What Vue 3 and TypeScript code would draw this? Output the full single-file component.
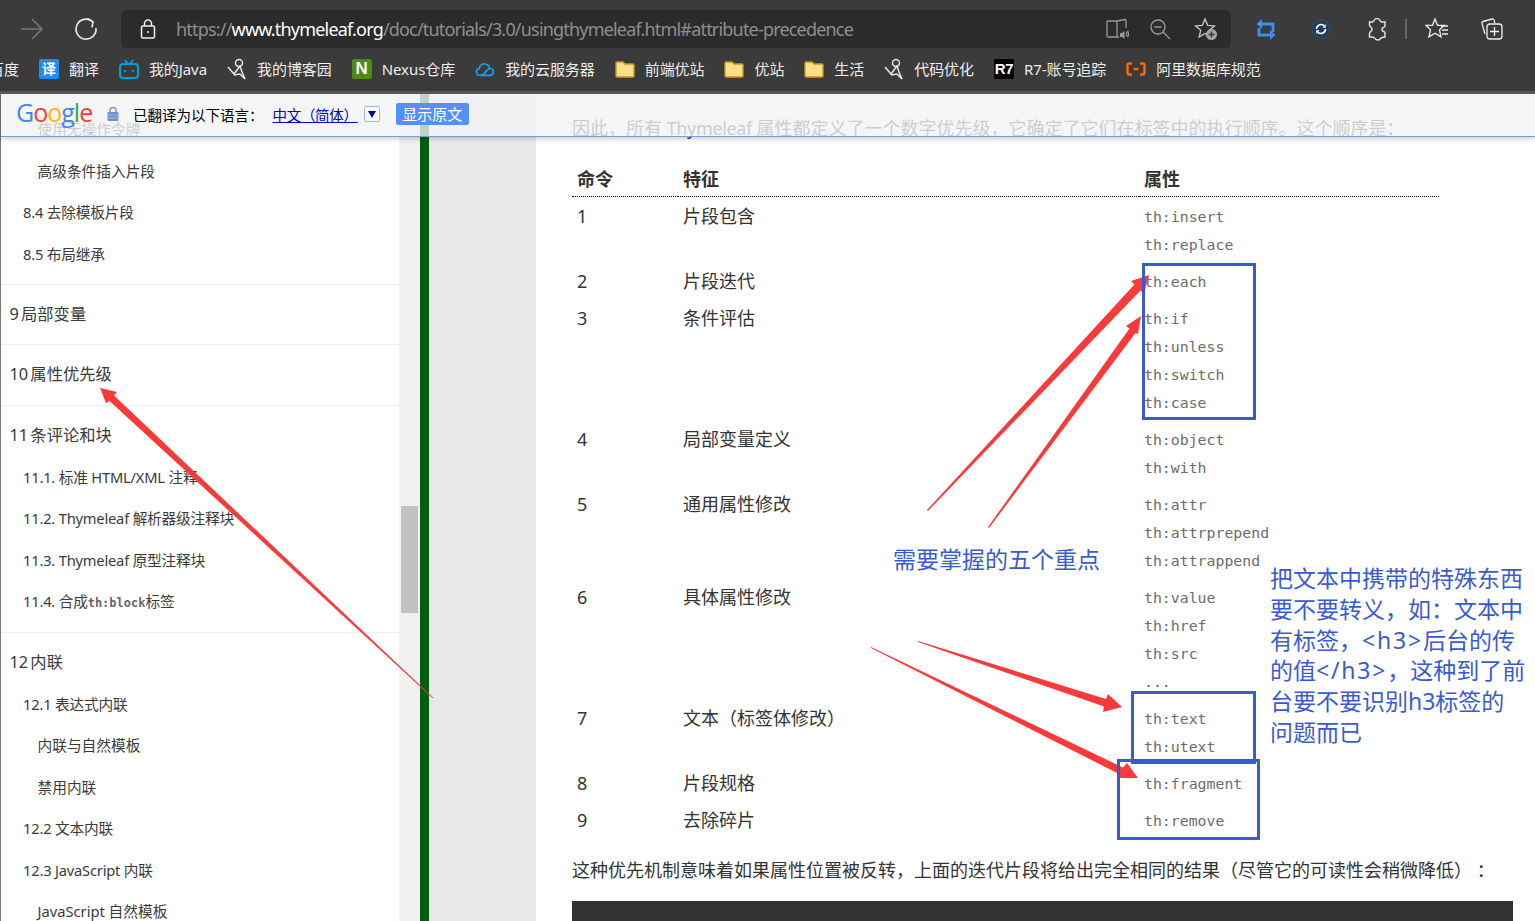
<script setup lang="ts">
interface NavItem { text: string; level: number; code?: string; after?: string }
interface Row { no: string; name: string; attrs: string[] }
interface Bookmark { label: string; icon: string }

const bookmarks: Bookmark[] = [
  { label: '翻译', icon: 'translate' },
  { label: '我的Java', icon: 'bili' },
  { label: '我的博客园', icon: 'blog' },
  { label: 'Nexus仓库', icon: 'nexus' },
  { label: '我的云服务器', icon: 'cloud' },
  { label: '前端优站', icon: 'folder' },
  { label: '优站', icon: 'folder' },
  { label: '生活', icon: 'folder' },
  { label: '代码优化', icon: 'blog' },
  { label: 'R7-账号追踪', icon: 'r7' },
  { label: '阿里数据库规范', icon: 'ali' },
]

const nav: NavItem[][] = [
  [
    { text: '使用无操作令牌', level: 2 },
    { text: '高级条件插入片段', level: 2 },
    { text: '8.4 去除模板片段', level: 1 },
    { text: '8.5 布局继承', level: 1 },
  ],
  [{ text: '9 局部变量', level: 0 }],
  [{ text: '10 属性优先级', level: 0 }],
  [
    { text: '11 条评论和块', level: 0 },
    { text: '11.1. 标准 HTML/XML 注释', level: 1 },
    { text: '11.2. Thymeleaf 解析器级注释块', level: 1 },
    { text: '11.3. Thymeleaf 原型注释块', level: 1 },
    { text: '11.4. 合成', code: 'th:block', after: '标签', level: 1 },
  ],
  [
    { text: '12 内联', level: 0 },
    { text: '12.1 表达式内联', level: 1 },
    { text: '内联与自然模板', level: 2 },
    { text: '禁用内联', level: 2 },
    { text: '12.2 文本内联', level: 1 },
    { text: '12.3 JavaScript 内联', level: 1 },
    { text: 'JavaScript 自然模板', level: 2 },
  ],
]

const rows: Row[] = [
  { no: '1', name: '片段包含', attrs: ['th:insert', 'th:replace'] },
  { no: '2', name: '片段迭代', attrs: ['th:each'] },
  { no: '3', name: '条件评估', attrs: ['th:if', 'th:unless', 'th:switch', 'th:case'] },
  { no: '4', name: '局部变量定义', attrs: ['th:object', 'th:with'] },
  { no: '5', name: '通用属性修改', attrs: ['th:attr', 'th:attrprepend', 'th:attrappend'] },
  { no: '6', name: '具体属性修改', attrs: ['th:value', 'th:href', 'th:src', '...'] },
  { no: '7', name: '文本（标签体修改）', attrs: ['th:text', 'th:utext'] },
  { no: '8', name: '片段规格', attrs: ['th:fragment'] },
  { no: '9', name: '去除碎片', attrs: ['th:remove'] },
]

// hand-drawn annotation arrows, full page coordinates
const arrows: string[] = [
  '100,388 117,392 114,395.500 433.500,698 433,698.500 109.500,401 106,403',
  '1149,275 1131,281 1134.400,284.500 927,510 928,511 1140.500,290.500 1144,294',
  '1141,316 1126,326 1129.500,328.500 988,527 989,528 1135.500,333 1138,334',
  '1122,707 1108,694 1106,699 918,641 918,642 1104,706.500 1103,712',
  '1138,778 1127,763 1123,767.500 871,647 871,648 1118,773.500 1120,778',
]
</script>

<template>
  <div class="screen">
    <header class="chrome">
      <div class="toolbar">
        <svg class="tool first" width="24" height="24" viewBox="0 0 24 24" fill="none" stroke="#777" stroke-width="1.5"><path d="M1 12h20M12 2l10 10-10 10" /></svg>
        <svg class="tool" width="24" height="24" viewBox="0 0 24 24" fill="none" stroke="#e8e8e8" stroke-width="1.6"><path d="M18.500 4.500A10 10 0 1 0 22 11" /><path d="M13.500 1.500l5.500 3.300-1 5.700" /></svg>
        <div class="url-bar">
          <svg class="lock" width="18" height="20" viewBox="0 0 18 20" fill="none" stroke="#eee" stroke-width="1.5"><rect x="2.500" y="7" width="13" height="12" rx="1.500" /><path d="M5.500 7V4.500a3.500 3.500 0 0 1 7 0V7" /><circle cx="9" cy="13" r="1" fill="#eee" stroke="none" /></svg>
          <span class="url"><span>https://</span><b>www.thymeleaf.org</b><span>/doc/tutorials/3.0/usingthymeleaf.html#attribute-precedence</span></span>
          <svg class="url-icon read" width="24" height="22" viewBox="0 0 24 22" fill="none" stroke="#999" stroke-width="1.300"><path d="M12 3H3a1 1 0 0 0-1 1v14a1 1 0 0 0 1 1h9zM12 3l8-1.500a1 1 0 0 1 1 1V10M12 19h2" /><path d="M15 15h2l2.500-2v8L17 19h-2z" fill="#999" stroke="none" /><path d="M21 14c1 1 1 3 0 4M22.500 13c1.500 2 1.500 4 0 6" /></svg>
          <svg class="url-icon zoom" width="22" height="22" viewBox="0 0 22 22" fill="none" stroke="#999" stroke-width="1.400"><circle cx="9" cy="9" r="7" /><path d="M5.500 9h7M14 14l7 7" /></svg>
          <svg class="url-icon fav" width="24" height="24" viewBox="0 0 24 24" fill="none" stroke="#ccc" stroke-width="1.300"><path d="M11 2l2.700 6.300 6.800.6-5.200 4.400 1.500 6.700L11 16.500 5.200 20l1.500-6.700L1.500 8.900l6.800-.6z" /><circle cx="17.500" cy="17.500" r="5.500" fill="#a5a5a5" stroke="none" /><path d="M14.500 17.500h6M17.500 14.500v6" stroke="#333" stroke-width="1.500" /></svg>
        </div>
        <svg class="ext loop" width="22" height="24" viewBox="0 0 22 24" fill="none" stroke="#3f8cf5" stroke-width="2.800"><path d="M5 7h13v8M16 18H4v-7" /><path d="M1.500 7L7 2v10zM20.500 18L15 13v10z" fill="#3f8cf5" stroke="none" /></svg>
        <svg class="ext sync" width="20" height="20" viewBox="0 0 20 20"><circle cx="10" cy="10" r="9" fill="#1f3c5c" stroke="#2f5170" /><path d="M5.500 10a4.500 4.500 0 0 1 7.500-3.300M14.500 10A4.500 4.500 0 0 1 7 13.300" fill="none" stroke="#fff" stroke-width="1.700" /><path d="M11.500 9l3.500-.5-.5-3.500zM8.500 11L5 11.500l.5 3.500z" fill="#fff" /></svg>
        <svg class="ext puzzle" width="22" height="24" viewBox="0 0 22 24" fill="none" stroke="#e6e6e6" stroke-width="1.400"><path d="M8 3.500c1-2.500 5-2.500 6 0 .4 1 1 1.500 2.500 1.500H19v4c0 1-.8 1.300-1.500 1.500-2 .6-2 3.400 0 4 .7.200 1.500.5 1.500 1.500v4c-2 .4-3.500 0-4.500 1.500-1 2-4.500 2-5.500 0-.7-1.300-2-1.500-3.500-1.500H3.500v-3.500c0-1 .8-1.500 1.300-2 1.700-1.500 1.700-3 0-4.500-.5-.5-1.300-1-1.300-2V5H6c1 0 1.600-.6 2-1.500z" /></svg>
        <span class="divider"></span>
        <svg class="ext star" width="24" height="24" viewBox="0 0 24 24" fill="none" stroke="#eee" stroke-width="1.300"><path d="M10 2l2.500 6.300H19l-4.500 4.600 1.500 7-6-3.600-6 3.600 1.500-7L1 8.300h6.500z" /><path d="M16 9h7M17 13h6M17 17h6" /></svg>
        <svg class="ext coll" width="24" height="24" viewBox="0 0 24 24" fill="none" stroke="#eee" stroke-width="1.300"><path d="M5 17L2 6.500c-.3-1 .2-1.800 1-2L12 2c1-.2 1.800.2 2 1l1 3" /><rect x="7" y="7" width="15" height="15" rx="3" /><path d="M14.500 10v9M10 14.500h9" /></svg>
      </div>
      <nav class="bookmarks">
        <span class="bm-cut">百度</span>
        <div v-for="bm in bookmarks" :key="bm.label" class="bm">
          <span class="bm-icon">
            <span v-if="bm.icon === 'translate'" class="ic-translate">译</span>
            <svg v-else-if="bm.icon === 'bili'" width="20" height="20" viewBox="0 0 20 20" fill="none" stroke="#00a1d6" stroke-width="2"><rect x="1" y="5" width="18" height="14" rx="3" /><path d="M6 1l3 4M14 1l-3 4" /><path d="M6 11v2M14 11v2" /></svg>
            <svg v-else-if="bm.icon === 'blog'" width="20" height="22" viewBox="0 0 20 22" fill="none" stroke="#e8e8e8" stroke-width="1.500"><circle cx="12" cy="5" r="3.500" /><path d="M1 9l6 7 6-8 2 6 3 7-5-5-6 1" /></svg>
            <span v-else-if="bm.icon === 'nexus'" class="ic-nexus">N</span>
            <svg v-else-if="bm.icon === 'cloud'" width="22" height="18" viewBox="0 0 22 18" fill="none" stroke="#1e9cf0" stroke-width="1.800"><path d="M5 16a3.800 3.800 0 0 1-.5-7.500C5.500 4 9.500 2 13 4c2 1 3 3 3 5" /><path d="M5 16h12a3.800 3.800 0 0 0 0-7.500c-2.500 0-4 2-6 4.500-1.500 2-3 3-6 3z" /></svg>
            <svg v-else-if="bm.icon === 'folder'" width="20" height="20" viewBox="0 0 20 20"><path d="M1 4a1 1 0 0 1 1-1h6l2 2h8a1 1 0 0 1 1 1v11a1 1 0 0 1-1 1H2a1 1 0 0 1-1-1z" fill="#fbde85" stroke="#c8962a" stroke-width="1.400" /></svg>
            <span v-else-if="bm.icon === 'r7'" class="ic-r7">R7</span>
            <svg v-else-if="bm.icon === 'ali'" width="20" height="14" viewBox="0 0 20 14" fill="none" stroke="#ff6a00" stroke-width="2.400"><path d="M6 1.500H3a1.500 1.500 0 0 0-1.500 1.500v8A1.500 1.500 0 0 0 3 12.500h3M14 1.500h3A1.500 1.500 0 0 1 18.500 3v8a1.500 1.500 0 0 1-1.500 1.500h-3M7.500 7h5" /></svg>
          </span>
          <span class="bm-label">{{ bm.label }}</span>
        </div>
      </nav>
    </header>

    <main class="page">
      <aside class="sidebar">
        <div v-for="(group, g) in nav" :key="g" class="nav-group">
          <div v-for="item in group" :key="item.text" class="nav-item" :class="'lv' + item.level">
            {{ item.text }}<code v-if="item.code">{{ item.code }}</code>{{ item.after }}
          </div>
        </div>
      </aside>
      <div class="scrollbar"><div class="thumb"></div></div>
      <div class="green"></div>
      <div class="gutter"></div>
      <article class="content">
        <p>因此，所有 <span class="tight">Thymeleaf</span> 属性都定义了一个数字优先级，它确定了它们在标签中的执行顺序。这个顺序是：</p>
        <table>
          <thead>
            <tr><th class="c1">命令</th><th class="c2">特征</th><th>属性</th></tr>
          </thead>
          <tbody>
            <tr v-for="r in rows" :key="r.no">
              <td>{{ r.no }}</td>
              <td>{{ r.name }}</td>
              <td class="attrs"><code v-for="a in r.attrs" :key="a">{{ a }}</code></td>
            </tr>
          </tbody>
        </table>
        <p class="last">这种优先机制意味着如果属性位置被反转，上面的迭代片段将给出完全相同的结果（尽管它的可读性会稍微降低） ：</p>
        <div class="code-block"></div>
      </article>
    </main>

    <div class="translate-bar">
      <span class="google"><i class="b">G</i><i class="r">o</i><i class="y">o</i><i class="b">g</i><i class="g">l</i><i class="r">e</i></span>
      <svg class="tb-lock" width="12" height="14" viewBox="0 0 12 14"><rect x="0.500" y="5" width="11" height="9" rx="1" fill="#6f93c9" /><path d="M3 5V3.500a3 3 0 0 1 6 0V5" fill="none" stroke="#6f93c9" stroke-width="1.500" /><path d="M1 8h10M1 11h10" stroke="#a9c0e2" stroke-width="0.800" /></svg>
      <span class="tb-text">已翻译为以下语言：</span>
      <a class="tb-link">中文（简体）</a>
      <span class="tb-drop"><i></i></span>
      <button class="tb-btn">显示原文</button>
    </div>

    <svg class="marks" width="1535" height="921" viewBox="0 0 1535 921">
      <polygon v-for="(p, i) in arrows" :key="i" :points="p" fill="#f93a3a" />
      <g fill="none" stroke="#3a5bd0" stroke-width="3">
        <rect x="1143.500" y="264.500" width="111" height="154" />
        <rect x="1132.500" y="692.500" width="122" height="70" />
        <rect x="1118.500" y="760.500" width="140" height="78" />
      </g>
    </svg>
    <div class="note note-a">需要掌握的五个重点</div>
    <div class="note note-b">把文本中携带的特殊东西<br />要不要转义，如：文本中<br />有标签，<span class="wide">&lt;h3&gt;</span>后台的传<br />的值<span class="wide">&lt;/h3&gt;</span>，这种到了前<br />台要不要识别h3标签的<br />问题而已</div>
  </div>
</template>

<style scoped>
.screen {
  position: relative;
  width: 1535px;
  height: 921px;
  overflow: hidden;
  background: #fff;
  color: #333;
  font-family: "Noto Sans", "Noto Sans CJK SC", sans-serif;
}

.chrome {
  height: 94px;
  background: #3b3b3b;
  border-bottom: 3px solid #5c5c5c;
  box-sizing: border-box;
  color: #eee;
}
.toolbar {
  display: flex;
  align-items: center;
  height: 58px;
  padding-bottom: 1px;
  box-sizing: border-box;
}
.tool.first { margin-left: 20px; }
.tool + .tool { margin-left: 30px; }
.url-bar {
  display: flex;
  align-items: center;
  width: 1110px;
  height: 38px;
  margin-left: 23px;
  background: #2b2b2b;
  border-radius: 6px;
}
.lock { margin-left: 18px; }
.url {
  margin-left: 19px;
  font-size: 18px;
  letter-spacing: -0.81px;
  color: #8f8f8f;
  white-space: nowrap;
}
.url b { font-weight: 400; color: #fff; }
.url-icon { flex: none; }
.read { margin-left: auto; }
.zoom { margin-left: 20px; }
.fav { margin-left: 23px; margin-right: 13px; }
.ext { flex: none; }
.loop { margin-left: 24px; }
.sync { margin-left: 34px; }
.puzzle { margin-left: 35px; }
.divider {
  width: 2px;
  height: 20px;
  margin-left: 17px;
  background: #666;
}
.star { margin-left: 18px; }
.coll { margin-left: 31px; }

.bookmarks {
  display: flex;
  align-items: center;
  height: 24px;
  margin-top: -2px;
  white-space: nowrap;
  font-size: 15px;
}
.bm-cut {
  width: 19px;
  margin-right: 20px;
  direction: rtl;
  overflow: hidden;
}
.bm {
  display: flex;
  align-items: center;
  margin-right: 20px;
}
.bm-label { letter-spacing: -0.07px; }
.bm-icon {
  display: flex;
  align-items: center;
  justify-content: center;
  flex: none;
  width: 20px;
  height: 20px;
  margin-top: 2px;
  margin-right: 10px;
}
.ic-translate {
  width: 20px;
  height: 20px;
  border-radius: 2px;
  background: #1d8cf5;
  color: #fff;
  font-size: 14px;
  font-weight: 700;
  line-height: 20px;
  text-align: center;
}
.ic-nexus {
  width: 20px;
  height: 20px;
  border-radius: 2px;
  background: #4f8a10;
  color: #fff;
  font: 700 17px/20px "Liberation Sans", sans-serif;
  text-align: center;
}
.ic-r7 {
  width: 20px;
  height: 20px;
  background: #000;
  color: #fff;
  font: 700 15px/20px "Liberation Sans", sans-serif;
  letter-spacing: -0.5px;
  text-align: center;
}

.page {
  display: flex;
  height: 827px;
}
.sidebar {
  flex: none;
  width: 399px;
  padding-top: 15px;
  border-left: 1px solid #777;
  box-sizing: border-box;
  font-size: 14.700px;
  letter-spacing: -0.2px;
  color: #3a3a3a;
  overflow: hidden;
}
.nav-group {
  padding: 9px 0;
  border-bottom: 1px solid #eee;
}
.nav-group:first-child { padding: 0 0 8.400px; }
.nav-item {
  height: 41.600px;
  line-height: 41.600px;
  white-space: nowrap;
}
.lv0 {
  padding-left: 8.500px;
  font-size: 16.300px;
  letter-spacing: 0;
  word-spacing: -2px;
}
.lv1 { padding-left: 22px; }
.lv2 { padding-left: 36.500px; letter-spacing: 0; }
.nav-item code {
  font: 700 12px "DejaVu Sans Mono", monospace;
  letter-spacing: 0;
  color: #666;
}
.scrollbar {
  flex: none;
  width: 21px;
  background: #f0f0f0;
  padding: 412px 2px 0;
  box-sizing: border-box;
}
.thumb {
  height: 107px;
  background: #c1c1c1;
}
.green {
  flex: none;
  width: 9px;
  background: #005f0f;
}
.gutter {
  flex: none;
  width: 107px;
  background: #e9e9e9;
}
.content {
  flex: 1;
  padding: 20px 22px 0 36px;
  font-size: 18px;
  line-height: 28px;
  letter-spacing: 0;
  color: #333;
}
.content p {
  margin: 0 0 17.500px;
  white-space: nowrap;
}
.content p.last { margin-bottom: 16.500px; }
.tight { letter-spacing: -0.35px; }
table {
  width: 867px;
  margin-bottom: 17.500px;
  border-collapse: collapse;
  table-layout: fixed;
}
th, td {
  padding: 4.500px 5px;
  text-align: left;
  vertical-align: top;
}
th {
  padding: 5px 5px 3px;
  font-weight: 700;
  border-bottom: 1px dotted #000;
}
tbody tr:first-child td { padding-top: 5.500px; }
td.attrs { padding-top: 5.500px; padding-bottom: 3.500px; }
tbody tr:first-child td.attrs { padding-top: 6.500px; }
.c1 { width: 96px; }
.c2 { width: 451px; }
td code {
  display: block;
  font: 14.850px/28px "DejaVu Sans Mono", monospace;
  color: #6c6c6c;
}
.code-block {
  width: 941px;
  height: 60px;
  background: #333;
}

.translate-bar {
  position: absolute;
  top: 94px;
  left: 1px;
  right: 0;
  display: flex;
  align-items: center;
  height: 43px;
  padding-bottom: 2px;
  box-sizing: border-box;
  background: rgba(243, 243, 243, 0.8);
  border-bottom: 1px solid #7d9bd1;
  box-shadow: 0 1px 6px rgba(0, 0, 0, 0.25);
  color: #000;
  font-size: 14.500px;
}
.google {
  width: 76px;
  margin-top: -4px;
  margin-left: 15px;
  font: 400 25px/30px "Open Sans", sans-serif;
  letter-spacing: -1px;
}
.google i { font-style: normal; }
.google .b { color: #4285f4; }
.google .r { color: #ea4335; }
.google .y { color: #fbbc05; }
.google .g { color: #34a853; }
.tb-lock { margin-left: 15px; }
.tb-text { margin-left: 14px; }
.tb-link {
  margin-left: 9px;
  color: #0000cc;
  letter-spacing: -0.3px;
  text-decoration: underline;
}
.tb-drop {
  display: flex;
  align-items: center;
  justify-content: center;
  width: 14px;
  height: 14px;
  margin-left: 6px;
  background: #f4f7fd;
  border: 1px solid #9db7e4;
  border-radius: 2px;
}
.tb-drop i {
  border-top: 7px solid #00008b;
  border-left: 4px solid transparent;
  border-right: 4px solid transparent;
}
.tb-btn {
  width: 73px;
  height: 22px;
  margin-left: 16px;
  padding: 0;
  border: 0;
  border-radius: 2px;
  background: #5390fb;
  color: #fff;
  font: 15px/22px "Noto Sans", "Noto Sans CJK SC", sans-serif;
}

.marks {
  position: absolute;
  top: 0;
  left: 0;
  pointer-events: none;
}
.note {
  position: absolute;
  color: #3a5bd0;
  font-size: 23px;
  white-space: nowrap;
}
.note .wide { letter-spacing: 1.800px; }
.note-a {
  top: 543px;
  left: 893px;
  line-height: 32px;
}
.note-b {
  top: 563px;
  left: 1270px;
  line-height: 30.800px;
}
</style>

<style>
html, body { margin: 0; overflow: hidden; background: #fff; }
</style>
